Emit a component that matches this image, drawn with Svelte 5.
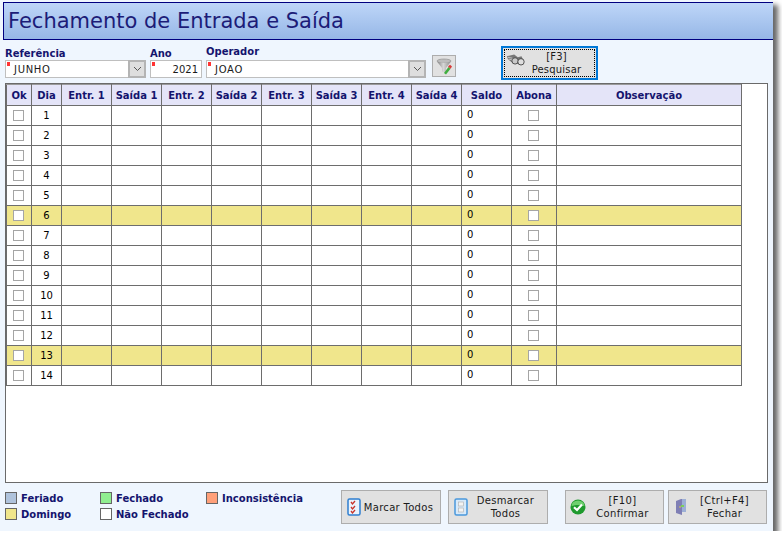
<script>
  const cols = ['Ok','Dia','Entr. 1','Saída 1','Entr. 2','Saída 2','Entr. 3','Saída 3','Entr. 4','Saída 4','Saldo','Abona','Observação'];
  const days = Array.from({length:14},(_,i)=>i+1);
  const blanks = Array.from({length:8});
  const yellow = [6,13];
</script>

<div class="win">
  <div class="title">Fechamento de Entrada e Saída</div>
  <div class="filters">
    <div class="field f1">
      <label for="r">Referência</label>
      <div class="box" id="r"><i class="req"></i><span>JUNHO</span><b class="arrow"><svg width="9" height="6" viewBox="0 0 9 6"><path d="M1 1l3.500 3.500L8 1" fill="none" stroke="#555"/></svg></b></div>
    </div>
    <div class="field f2">
      <label for="a">Ano</label>
      <div class="box num" id="a"><i class="req"></i><span>2021</span></div>
    </div>
    <div class="field f3">
      <label for="o">Operador</label>
      <div class="box" id="o"><i class="req"></i><span>JOAO</span><b class="arrow"><svg width="9" height="6" viewBox="0 0 9 6"><path d="M1 1l3.500 3.500L8 1" fill="none" stroke="#555"/></svg></b></div>
    </div>
    <button class="btn filter" aria-label="Filtro">
      <svg width="17" height="17" viewBox="0 0 17 17">
        <defs><linearGradient id="fg" x1="0" x2="1"><stop offset="0" stop-color="#7c7c7c"/><stop offset=".45" stop-color="#d8d8d8"/><stop offset="1" stop-color="#8a8a8a"/></linearGradient></defs>
        <ellipse cx="8" cy="3" rx="7" ry="2" fill="#bdbdbd" stroke="#8a8a8a" stroke-width=".6"/>
        <path d="M1 3.500c2 1.500 12 1.500 14 0L10 10v5l-4-1.500V10z" fill="url(#fg)"/>
        <path d="M8 15l4.500-6 2 1.800L10 16.500z" fill="#3fae3f"/>
        <path d="M12 8.500l2-1.800 2 1.800-1.500 2.300z" fill="#d83a3a"/>
      </svg>
    </button>
    <button class="btn search">
      <span class="focus">
        <svg class="bino" width="20" height="14" viewBox="0 0 22 14">
          <path d="M1 3l8-2 4 3 4-1 2 4-3 5-4-1-2-3-3 2-5-4z" fill="#777"/>
          <circle cx="10" cy="8" r="3.500" fill="#c9c9c9" stroke="#444"/>
          <circle cx="16.500" cy="9" r="3.500" fill="#dedede" stroke="#444"/>
          <path d="M2 4l5 1M3 6l4 1" stroke="#ddd" stroke-width=".8"/>
        </svg>
        <span class="lbl">[F3]<br />Pesquisar</span>
      </span>
    </button>
  </div>

  <div class="panel">
    <table>
      <colgroup>
        <col style="width:25px"/><col style="width:30px"/>
        {#each blanks as _}<col style="width:50px"/>{/each}
        <col style="width:50px"/><col style="width:45px"/><col style="width:185px"/>
      </colgroup>
      <thead>
        <tr>{#each cols as c}<th>{c}</th>{/each}</tr>
      </thead>
      <tbody>
        {#each days as d}
          <tr class:yellow={yellow.includes(d)}>
            <td class="c"><i class="chk"></i></td>
            <td class="c">{d}</td>
            {#each blanks as _}<td></td>{/each}
            <td class="saldo">0</td>
            <td class="c"><i class="chk"></i></td>
            <td></td>
          </tr>
        {/each}
      </tbody>
    </table>
  </div>

  <div class="footer">
    <div class="legend">
      <div class="lg"><i class="sw" style="background:#afc3dc"></i>Feriado</div>
      <div class="lg"><i class="sw" style="background:#f0e68c"></i>Domingo</div>
    </div>
    <div class="legend l2">
      <div class="lg"><i class="sw" style="background:#90ee90"></i>Fechado</div>
      <div class="lg"><i class="sw" style="background:#fff"></i>Não Fechado</div>
    </div>
    <div class="legend l3">
      <div class="lg"><i class="sw" style="background:#ffa07a"></i>Inconsistência</div>
    </div>
    <div class="actions">
      <button class="btn act">
        <svg width="14" height="18" viewBox="0 0 14 18"><rect x="1" y="1" width="12" height="16" rx="1.500" fill="#eaf3fc" stroke="#2f7fd0" stroke-width="1.500"/><path d="M4 4l1.500 2L8 3M4 9l1.500 2L8 8M4 13l1.500 2L8 12" fill="none" stroke="#c8342c" stroke-width="1.300"/></svg>
        <span class="t">Marcar Todos</span>
      </button>
      <button class="btn act a2">
        <svg width="14" height="18" viewBox="0 0 14 18"><rect x="1" y="1" width="12" height="16" rx="1.500" fill="#d8eafa" stroke="#4a98dc" stroke-width="1.500"/><rect x="4.500" y="4" width="5" height="4" fill="#f3f3f3" stroke="#b5b5b5" stroke-width=".7"/><rect x="4.500" y="10" width="5" height="4" fill="#f3f3f3" stroke="#b5b5b5" stroke-width=".7"/></svg>
        <span class="t">Desmarcar<br />Todos</span>
      </button>
      <button class="btn act a3">
        <svg width="16" height="16" viewBox="0 0 16 16"><circle cx="8" cy="8" r="7.500" fill="#1f9a2e"/><path d="M1.500 7a6.500 5.500 0 0 1 13 0c-3-1.500-9-1.500-13 0z" fill="#6fd06f"/><path d="M4 8.200l3 2.800 5-5.500" fill="none" stroke="#fff" stroke-width="2.200"/></svg>
        <span class="t">[F10]<br />Confirmar</span>
      </button>
      <button class="btn act a4">
        <svg width="12" height="18" viewBox="0 0 12 18"><path d="M1 3l5-2h5v13H7v3l-6-2z" fill="#7f7fb5"/><path d="M7 1h4v13H7z" fill="#9db0d6"/><path d="M6 7h3v2H6z" fill="#7ccf5a"/><circle cx="5" cy="9" r=".8" fill="#e8d04a"/></svg>
        <span class="t">[Ctrl+F4]<br />Fechar</span>
      </button>
    </div>
  </div>
</div>

<style>
  :global(body) { margin: 0; background: #fff; }
  .win {
    box-sizing: border-box;
    width: 773px;
    height: 531px;
    padding: 2px 0 0 3px;
    background: #eff6fe;
    box-shadow: 5px 5px 5px rgba(0,0,0,.6);
    font-family: "DejaVu Sans", Tahoma, sans-serif;
    font-size: 10px;
    color: #1a1a1a;
    display: flex;
    flex-direction: column;
  }
  .title {
    box-sizing: border-box;
    height: 38px;
    width: 770px;
    flex: none;
    border: 1px solid #000080;
    border-right: 0;
    background: linear-gradient(#bed6f8, #96b7e6);
    color: #1c1c78;
    font-size: 21px;
    line-height: 36px;
    padding-left: 4px;
  }
  .filters {
    display: flex;
    height: 43px;
    flex: none;
    padding-left: 2px;
  }
  .field { display: flex; flex-direction: column; margin-top: 7px; }
  .field label {
    font-weight: bold;
    color: #14146e;
    font-size: 10px;
    line-height: 13px;
    height: 13px;
  }
  .f1 { width: 141px; margin-right: 4px; }
  .f2 { width: 52px; margin-right: 4px; }
  .f3 { width: 220px; margin-top: 5px; margin-right: 6px; }
  .f3 .box { margin-top: 2px; }
  .box {
    position: relative;
    box-sizing: border-box;
    height: 18px;
    background: #fff;
    border: 1px solid #bfbfbf;
    display: flex;
    align-items: center;
    padding-left: 8px;
    letter-spacing: .7px;
  }
  .num { justify-content: flex-end; padding-right: 3px; letter-spacing: 0; }
  .req {
    position: absolute;
    left: 1px; top: 1px;
    width: 3px; height: 4px;
    background: #f33;
  }
  .arrow {
    position: absolute;
    right: -1px; top: -1px;
    box-sizing: border-box;
    width: 18px; height: 18px;
    background: #dedede;
    border: 2px solid #b4b4b4;
    display: flex;
    align-items: center;
    justify-content: center;
  }
  .btn {
    box-sizing: border-box;
    margin: 0;
    padding: 0;
    background: #e1e1e1;
    border: 1px solid #adadad;
    font: inherit;
    color: #1a1a1a;
    letter-spacing: .2px;
    display: flex;
    align-items: center;
  }
  .filter {
    width: 24px; height: 22px;
    margin-top: 15px;
    justify-content: center;
  }
  .search {
    width: 97px; height: 34px;
    margin: 6px 0 0 45px;
    border: 2px solid #0078d7;
    padding: 1px;
  }
  .focus {
    flex: 1;
    align-self: stretch;
    border: 1px dotted #000;
    display: flex;
    align-items: center;
    padding-left: 1px;
  }
  .bino { flex: none; margin-top: -6px; }
  .lbl { flex: 1; text-align: center; line-height: 13px; padding: 0 7px 0 0; }
  .panel {
    box-sizing: border-box;
    width: 763px;
    height: 400px;
    flex: none;
    margin-left: 2px;
    background: #fff;
    border: 1px solid #6a6a6a;
  }
  table {
    table-layout: fixed;
    border-collapse: collapse;
    width: 735px;
    margin: 0;
    color: #000;
  }
  th, td {
    border: 1px solid #6d6d6d;
    padding: 0;
    height: 19px;
    font-size: 10px;
    box-sizing: border-box;
  }
  tr { height: 20px; }
  thead tr { height: 21px; }
  thead tr:first-child th { border-top-color: #9a9a9a; }
  th {
    background: #e4e4f8;
    color: #14146e;
    font-weight: bold;
  }
  .c { text-align: center; }
  .saldo { padding-left: 5px; padding-bottom: 2px; }
  .yellow td { background: #f0e68c; }
  .chk {
    display: block;
    box-sizing: border-box;
    width: 11px; height: 11px;
    margin: 0 auto;
    position: relative;
    left: -1px;
    background: #fff;
    border: 1px solid #a5a5a5;
  }
  .footer {
    flex: 1;
    display: flex;
    padding: 7px 0 0 2px;
  }
  .legend { width: 95px; }
  .l2 { width: 106px; }
  .l3 { width: 130px; }
  .lg {
    display: flex;
    align-items: center;
    height: 16px;
    font-weight: bold;
    color: #14146e;
    font-size: 10px;
  }
  .sw {
    box-sizing: border-box;
    width: 12px; height: 12px;
    margin-right: 4px;
    border: 1px solid #666;
  }
  .actions { display: flex; margin-left: 5px; height: 34px; }
  .act {
    width: 100px; height: 34px;
    padding-left: 5px;
    letter-spacing: .3px;
  }
  .act .t { flex: 1; text-align: center; line-height: 13px; white-space: nowrap; padding-right: 4px; }
  .a2 { margin-left: 7px; }
  .a3 { width: 99px; margin-left: 17px; padding-left: 4px; }
  .a4 { width: 99px; margin-left: 4px; padding-left: 6px; }
</style>
